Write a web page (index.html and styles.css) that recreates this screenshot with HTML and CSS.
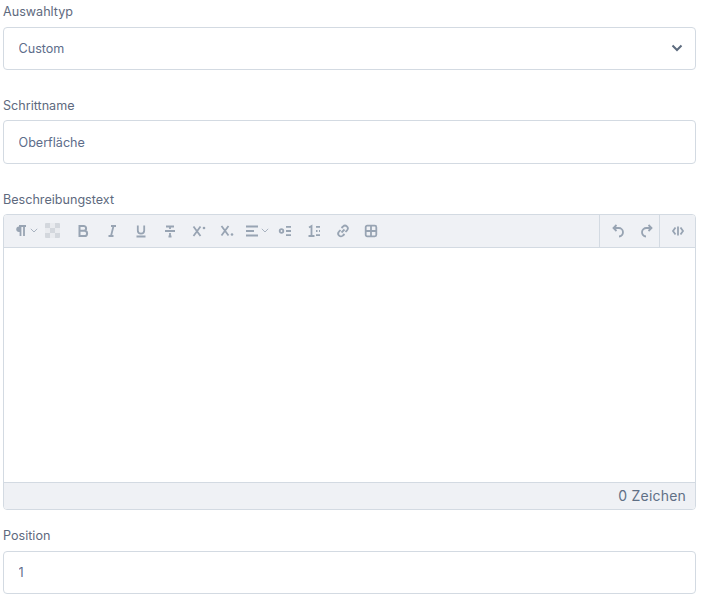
FILE: index.html
```html
<!DOCTYPE html>
<html lang="de">
<head>
<meta charset="utf-8">
<title>Schritt</title>
<link rel="stylesheet" href="styles.css">
</head>
<body>
<form class="form">
  <div class="field">
    <label class="label label-up">Auswahltyp</label>
    <div class="select-wrap">
      <select class="control select"><option>Custom</option></select>
      <svg class="chevron" viewBox="0 0 12 8"><path d="M1.500 1.500 6 6l4.500-4.500"/></svg>
    </div>
  </div>
  <div class="field">
    <label class="label">Schrittname</label>
    <input class="control" type="text" value="Oberfläche">
  </div>
  <div class="field field-editor">
    <label class="label">Beschreibungstext</label>
    <div class="editor">
      <div class="toolbar">
        <div class="tool-group main">
          <span class="tool tool-split">
            <svg class="ico" viewBox="0 0 14 14"><path class="solid" d="M6 2.500a2.700 2.700 0 0 0 0 5.400h1v-5.400z"/><path d="M13 2H6M7.500 2v10M11 2v10"/></svg>
            <svg class="caret" viewBox="0 0 8 5"><path d="M.8.800 4 4 7.200.800"/></svg>
          </span>
          <span class="tool tool-color">
            <svg class="checker" viewBox="0 0 15 15">
              <rect width="15" height="15" rx="1" fill="#d3d7dd"/>
              <path d="M5 0h5v5H5zM0 5h5v5H0zM10 5h5v5h-5zM5 10h5v5H5z" fill="#e9ebef"/>
            </svg>
          </span>
          <span class="tool"><svg class="ico bold" viewBox="0 0 14 14"><path d="M3.500 2h4.200a2.400 2.400 0 0 1 0 4.800H3.500zM3.500 6.800h5a2.600 2.600 0 0 1 0 5.200h-5z"/></svg></span>
          <span class="tool"><svg class="ico" viewBox="0 0 14 14"><path d="M6 2h5M3.500 12h5M8.500 2 6 12"/></svg></span>
          <span class="tool"><svg class="ico" viewBox="0 0 14 14"><path d="M3.800 1.500v5a3.200 3.200 0 0 0 6.400 0v-5M2.500 12.500h9"/></svg></span>
          <span class="tool"><svg class="ico" viewBox="0 0 14 14"><path d="M2 7h10M3 2.500h8M7 2.500V5M7 9v3.500M5.500 12.500h3"/></svg></span>
          <span class="tool"><svg class="ico" viewBox="0 0 14 14"><path d="m1.500 2.500 7 9.500M8.500 2.500l-7 9.500"/><circle class="solid" cx="12" cy="4" r="1.300"/></svg></span>
          <span class="tool"><svg class="ico" viewBox="0 0 14 14"><path d="m1.500 2 7 9.500M8.500 2l-7 9.500"/><circle class="solid" cx="12" cy="10.500" r="1.300"/></svg></span>
          <span class="tool tool-split tight">
            <svg class="ico" viewBox="0 0 14 14"><path d="M1 2.500h12M1 7h8M1 11.500h12"/></svg>
            <svg class="caret" viewBox="0 0 8 5"><path d="M.8.800 4 4 7.200.800"/></svg>
          </span>
          <span class="tool"><svg class="ico" viewBox="0 0 14 14"><circle cx="3.500" cy="7" r="1.800"/><path d="M8 2.800h5M8 7h5M8 11.200h5"/></svg></span>
          <span class="tool"><svg class="ico" viewBox="0 0 14 14"><path d="M2 3.500 4.500 2v10M1.500 12h6M9 2.800h4M9 7h1.500M12 7h1M9 11.200h4"/></svg></span>
          <span class="tool"><svg class="ico" viewBox="0 0 14 14"><path d="M5.500 4 7 2.500a2.700 2.700 0 0 1 4 3.800L9.500 8M8.500 10 7 11.500a2.700 2.700 0 0 1-4-3.800L4.500 6M5.500 8.500l3-3"/></svg></span>
          <span class="tool"><svg class="ico" viewBox="0 0 14 14"><rect x="1.700" y="1.700" width="10.600" height="10.600" rx="1.500"/><path d="M7 2v10M2 7h10"/></svg></span>
        </div>
        <div class="tool-group history">
          <span class="tool"><svg class="ico" viewBox="0 0 14 14"><path d="M5.500 1 2.500 4l3 3M3 4h4.500a4 4 0 0 1 .5 8.500"/></svg></span>
          <span class="tool"><svg class="ico" viewBox="0 0 14 14"><path d="M8.500 1l3 3-3 3M11 4H6.500a4 4 0 0 0-.5 8.500"/></svg></span>
        </div>
        <div class="tool-group code">
          <span class="tool"><svg class="ico" viewBox="0 0 14 14"><path d="M4.500 3.500 2 7l2.500 3.500M9.500 3.500 12 7l-2.500 3.500M7 2.500v9"/></svg></span>
        </div>
      </div>
      <div class="editor-body"></div>
      <div class="statusbar">0 Zeichen</div>
    </div>
  </div>
  <div class="field">
    <label class="label label-up">Position</label>
    <input class="control" type="text" value="1">
  </div>
</form>
</body>
</html>
```
FILE: styles.css
```css
* { box-sizing: border-box; }

html, body { margin: 0; background: #fff; }

body {
  font-family: Inter, "Liberation Sans", sans-serif;
  font-size: 13px;
  color: #64748b;
}

.form {
  width: 693px;
  margin-left: 3px;
  padding-top: 1.900px;
}

.field { margin-bottom: 25.100px; }
.field-editor { margin-bottom: 15.800px; }

.label {
  display: block;
  height: 21.100px;
  margin-bottom: 3.900px;
  line-height: 21.100px;
  font-size: 12.600px;
  color: #5e6a7e;
}

.label-up {
  height: 20.600px;
  margin-bottom: 4.400px;
  line-height: 20.600px;
}

.control {
  display: block;
  width: 100%;
  height: 43.400px;
  padding: 0 14.500px;
  border: 1px solid #d3dae2;
  border-radius: 4px;
  background: #fff;
  font: 12.600px Inter, "Liberation Sans", sans-serif;
  color: #5d6d8a;
  outline: none;
}

.select-wrap { position: relative; }
.select { appearance: none; }

.chevron {
  position: absolute;
  top: 17px;
  right: 13px;
  width: 12px;
  height: 8px;
  fill: none;
  stroke: #5d6b7e;
  stroke-width: 2;
}

.editor {
  display: flex;
  flex-direction: column;
  height: 296px;
  border: 1px solid #d3dae2;
  border-radius: 4px;
  overflow: hidden;
}

.toolbar {
  display: flex;
  height: 33px;
  flex: none;
  background: #eff1f5;
  border-bottom: 1px solid #d3dae2;
}

.tool-group { display: flex; align-items: center; }
.main { flex: 1; padding-left: 7.500px; }
.history { width: 60px; padding-left: 3.500px; border-left: 1px solid #d3dae2; }
.code { width: 36px; justify-content: center; border-left: 1px solid #d3dae2; }
.code .tool { width: 100%; }

.tool {
  display: flex;
  align-items: center;
  justify-content: center;
  flex: none;
  width: 28.800px;
  height: 100%;
}

.tool-split { gap: 3px; padding-right: 1px; }
.tight { gap: 2px; padding-left: 2px; }
.tool-color { padding-right: 4px; }

.ico {
  width: 14px;
  height: 14px;
  fill: none;
  stroke: #98a4b3;
  stroke-width: 1.800;
}

.ico .solid { fill: #98a4b3; stroke: none; }

.bold { stroke-width: 2; }

.caret {
  width: 8px;
  height: 5px;
  flex: none;
  fill: none;
  stroke: #a9b3c0;
  stroke-width: 1;
}

.checker { width: 15px; height: 15px; }

.editor-body { flex: 1; background: #fff; }

.statusbar {
  flex: none;
  height: 27px;
  padding-right: 9px;
  border-top: 1px solid #d3dae2;
  background: #eff1f5;
  line-height: 26px;
  text-align: right;
  font-size: 14px;
  letter-spacing: 0.2px;
  color: #5f6f85;
}
```
